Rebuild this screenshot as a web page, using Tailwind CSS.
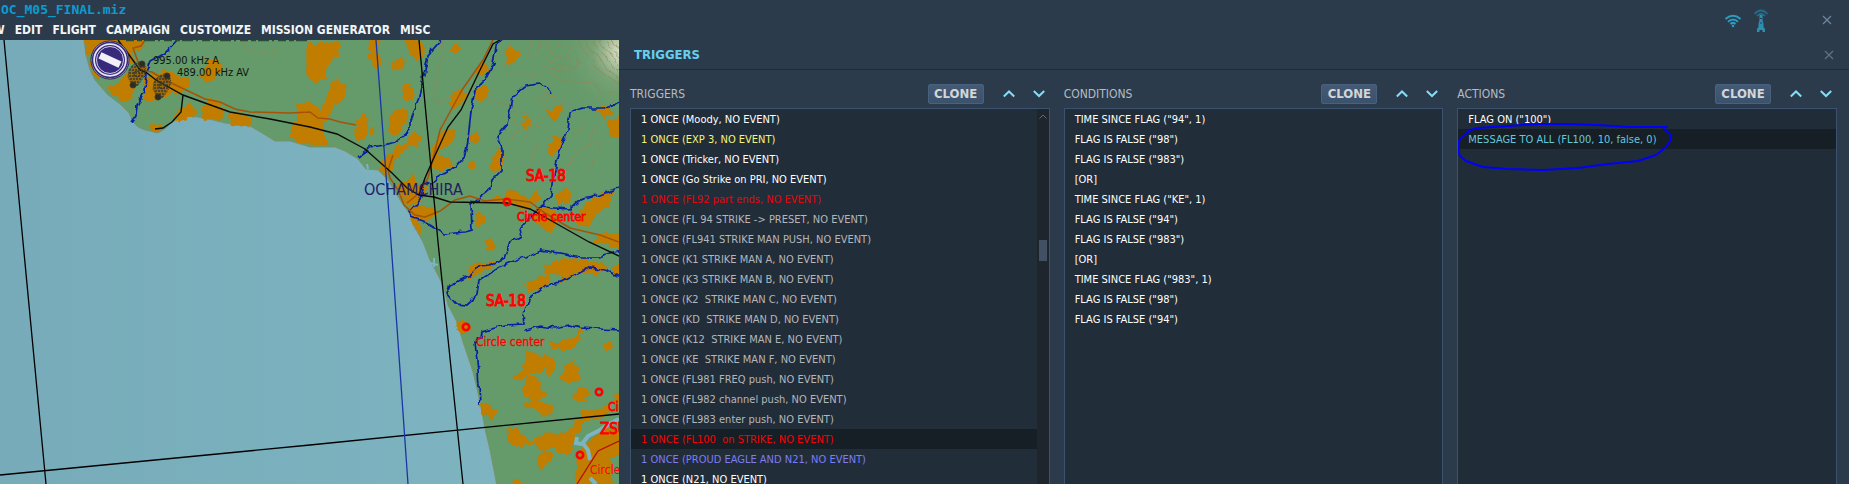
<!DOCTYPE html>
<html lang="en">
<head>
  <meta charset="UTF-8" />
  <meta name="viewport" content="width=device-width, initial-scale=1" />
  <title>Mission Editor - Triggers</title>
  <script src="https://cdn.jsdelivr.net/npm/@tailwindcss/browser@4"></script>
</head>
<body class="h-screen overflow-hidden bg-[#2c3b4c] font-['DejaVu_Sans_Condensed','DejaVu_Sans',sans-serif] text-xs text-white">

  <div class="relative flex h-full flex-col">
    <!-- Title and menu -->
    <header class="h-10 shrink-0 overflow-hidden">
      <h1 class="h-5 pl-px font-['DejaVu_Sans_Mono',monospace] text-[13px] leading-5 font-bold text-[#0c9bd0]">OC_M05_FINAL.miz</h1>
      <nav class="-ml-[27px] flex h-5 items-center gap-2.5 font-bold whitespace-nowrap text-[#f2f4f5]">
        <button>VIEW</button>
        <button>EDIT</button>
        <button>FLIGHT</button>
        <button>CAMPAIGN</button>
        <button>CUSTOMIZE</button>
        <button>MISSION GENERATOR</button>
        <button>MISC</button>
      </nav>
    </header>

    <!-- Connection status and window close -->
    <div class="absolute top-2 right-4 flex items-center">
      <svg class="mr-3 h-4 w-4" viewBox="0 0 16 16" fill="none" stroke="#2d9bbd" stroke-width="2">
        <path d="M.5 7Q8 .5 15.500 7M3 9.800Q8 5.200 13 9.800M5.500 12Q8 9.800 10.500 12" />
        <circle cx="8" cy="14" r="1.200" fill="#2d9bbd" stroke="none" />
      </svg>
      <svg class="mr-13 h-6 w-4" viewBox="0 0 16 24" fill="none">
        <path d="M1.500 6Q8-1 14.500 6M4 8Q8 3.500 12 8" stroke="#1f6f8b" stroke-width="1.800" />
        <path d="M6.500 7h3v5l1 4v3l1.500 2v3H9.500v-2h-3v2H4v-3l1.500-2v-3l1-4z" fill="#2d8fb0" />
        <path d="M7 10.500h2M7 15h2" stroke="#2c3b4c" />
      </svg>
      <button aria-label="Close editor">
        <svg class="h-3 w-3" viewBox="0 0 12 12" stroke="#71869c" stroke-width="1.200"><path d="m2 2 8 8M10 2l-8 8" /></svg>
      </button>
    </div>

    <div class="grid min-h-0 flex-1 grid-cols-[619fr_1230fr] grid-rows-[minmax(0,1fr)]">

      <!-- Map -->
      <svg class="h-full w-full" viewBox="0 40 619 444" preserveAspectRatio="xMinYMin slice" role="img" aria-label="Map">
        <defs>
          <linearGradient id="sea"><stop stop-color="#77abb9" /><stop offset="1" stop-color="#7fb6c2" /></linearGradient>
          <radialGradient id="peak" gradientUnits="userSpaceOnUse" cx="624" cy="52" r="70">
            <stop stop-color="#e4ead8" /><stop offset=".2" stop-color="#b3c6a5" /><stop offset=".45" stop-color="#7da57a" stop-opacity=".7" /><stop offset="1" stop-color="#669a6b" stop-opacity="0" />
          </radialGradient>
          <filter id="rough" filterUnits="userSpaceOnUse" x="0" y="40" width="619" height="444" color-interpolation-filters="sRGB">
            <feTurbulence type="fractalNoise" baseFrequency=".16" numOctaves="2" seed="4" />
            <feDisplacementMap in="SourceGraphic" scale="8" xChannelSelector="R" yChannelSelector="G" />
          </filter>
          <filter id="wavy" filterUnits="userSpaceOnUse" x="0" y="40" width="619" height="444" color-interpolation-filters="sRGB">
            <feTurbulence type="fractalNoise" baseFrequency=".12" numOctaves="2" seed="9" />
            <feDisplacementMap in="SourceGraphic" scale="6" xChannelSelector="R" yChannelSelector="G" />
          </filter>
          <g id="beacon" fill="none" stroke="#3c3a28">
            <path d="M-4-9-8-4-9 3-6 9-3 13 2 10 6 4 9-3 8-9 4-13Z" fill="#3c3a28" fill-opacity=".3" stroke-dasharray="1 1" />
            <path d="M-2-10H7M-6-7H8M-8-4H8M-8-1H8M-8 2H7M-7 5H5M-6 8H3M-4 11H1" stroke-width="1.500" stroke-dasharray="2 1" />
            <circle r="3" />
            <circle cx="5" cy="-10" r="3" fill="#2c2b24" /><circle cx="-4" cy="11" r="3" fill="#2c2b24" />
          </g>
          <g id="spot"><circle r="3.200" fill="none" stroke="#f00" stroke-width="2.600" /></g>
        </defs>

        <rect y="40" width="619" height="444" fill="url(#sea)" />
        <path fill="#659a6a" stroke="#7d8e62" stroke-width=".8" d="M84 40 86 55 90 70 95 80 108 95 120 104 129 113 133 122 138 127 145 130 158 133 165 129 172 122 180 118 190 116 205 118 225 123 250 126 262 133 275 141 290 141 300 144 310 147 335 147 345 151 358 159 366 169 378 170 388 180 400 200 411 216 415 228 423 242 430 260 443 285 448 305 457 322 463 342 473 372 480 402 485 429 490 450 497 486H620V38H84Z" />
        <rect x="520" y="40" width="99" height="90" fill="url(#peak)" />

        <!-- Contours -->
        <g fill="none" stroke="#9a8352" stroke-width=".8" opacity=".8" filter="url(#wavy)">
          <path d="M242 40 247 50 255 54 263 53 268 55 276 49 275 41M443 40 441 60 436 75 435 100 437 104 470 88M487 98 500 104 515 106 540 128M510 40 505 55 504 68 515 74 535 75 548 72 560 80 580 83 595 82 600 92 619 94" />
          <path d="M532 40 528 52 538 63 555 70 571 72 579 62 575 52 566 43M540 42 538 52 552 63 568 65 572 58 562 48 552 41M546 42 552 54 564 60M578 40 584 52 592 60 600 72 619 84M585 40 590 50 600 58 607 70 619 78M592 40 598 50 606 56 612 67 619 72M599 40 604 48 611 54 619 66M606 40 610 46 619 58M612 40 619 50" />
          <path d="M536 98 545 94 560 98 565 104 555 108 540 106ZM543 100 555 101M513 110 518 130 512 140M525 140 535 128 543 118M532 150 540 140 530 165M572 135 590 122 594 128 588 145 575 155 560 180M580 150 600 140 592 165 582 178M387 60 390 68 398 70 406 64 400 54" />
        </g>

        <!-- Built-up areas -->
        <g fill="#c17d00" stroke="#c17d00" filter="url(#rough)">
          <path d="M84 38 143 38 143 47 137 50 132 53 134 62 128 64 120 55 110 50 88 54ZM90 60 96 79 102 78 102 60ZM108 90 118 82 125 76 135 70 142 60 147 68 143 76 134 85 132 98 125 102 118 97 112 96ZM145 80 155 75 165 70 178 76 190 80 189 87 183 92 170 94 158 98 150 101 144 98ZM206 66 212 60 222 62 224 68 218 72 213 80 206 82 200 75ZM184 107 190 104 194 110 198 111 195 117 185 118 178 120 174 116ZM204 104 212 99 220 102 223 112 221 120 208 119 201 117ZM229 114 240 113 252 119 251 125 240 126 230 124ZM151 125 160 124 162 128 155 132Z" />
          <path d="M296 104 312 103 324 118 322 130 328 143 318 146 310 143 296 142 289 134 292 125 298 118ZM307 44 340 42 338 56 328 63 325 78 315 82 307 76ZM332 84 338 80 346 85 345 98 336 104 330 113 325 120 318 115 322 107 328 98ZM370 38 380 38 378 52 381 60 376 70 372 60 368 55ZM391 65 397 58 405 60 402 68 392 69ZM405 38 418 38 425 52 420 58 416 60 410 52ZM402 90 407 82 412 88 414 98 408 102 403 98ZM395 110 405 108 408 118 402 130 396 135 390 132 391 118ZM358 120 363 114 368 116 367 125 364 138 359 141 355 135ZM370 127 374 130 371 135Z" />
          <path d="M452 45 458 43 460 50 456 54 451 51ZM506 50 512 47 521 54 516 62 508 64ZM477 68 483 63 488 70 484 76 478 74ZM477 90 485 84 489 92 486 98 480 101 475 98ZM452 95 458 88 466 95 462 102 455 108 450 103ZM440 136 447 130 455 132 452 143 444 146 438 150 436 156 444 158 452 162 448 167 440 172 434 168 430 158 434 145ZM410 138 415 131 421 138 415 146 410 144ZM390 155 398 145 408 143 404 152 396 158 388 164ZM382 160 390 154 396 164 390 170 386 178 380 170ZM470 136 476 132 479 140 475 145 470 142ZM467 164 473 161 477 166 472 170ZM496 150 502 150 504 160 500 170 494 172 490 165ZM522 122 527 116 531 124 526 130ZM549 112 560 104 562 112 556 120 549 117ZM597 110 608 106 613 114 604 117ZM607 122 621 117 621 138 609 135ZM550 143 556 135 562 140 558 152 552 156 548 150Z" />
          <path d="M397 184 408 182 412 174 416 184 426 188 422 200 410 206 402 196ZM408 208 420 205 432 210 437 213 428 220 418 222 422 232 416 230ZM476 216 482 213 486 220 480 226 476 222ZM490 198 505 197 509 192 520 192 528 198 536 190 540 200 530 206 520 208 508 202 495 203ZM557 196 565 189 573 195 568 202 558 201ZM580 212 590 200 600 195 614 190 610 202 602 210 594 218 588 228 578 224ZM535 210 545 208 560 215 556 224 550 232 540 226 532 220ZM592 242 600 235 615 232 621 236 621 248 600 242ZM485 241 493 241 493 250 487 250Z" />
          <path d="M468 270 475 263 490 263 495 262 488 270 478 275 470 278ZM543 266 555 262 570 258 588 260 603 265 606 270 598 274 584 272 570 276 562 282 560 274 548 274ZM525 285 535 278 548 275 550 283 540 288 528 293ZM612 268 621 265 621 276 613 275ZM457 323 464 319 470 328 462 334 457 330ZM549 346 560 340 575 338 580 337 576 345 566 350 552 348ZM576 330 582 327 585 332 578 336ZM603 345 610 341 611 347 606 352ZM513 379 525 365 528 352 542 356 555 358 554 370 549 376 546 368 535 372 525 376 514 381ZM561 380 566 365 573 361 580 370 578 380 568 383ZM522 390 528 377 538 378 540 386 548 392 546 397 534 400 524 397ZM523 405 535 400 552 405 552 416 543 415 535 410ZM573 396 580 388 590 390 588 399 577 402ZM614 400 621 390 621 404ZM481 404 488 405 497 412 493 418 482 415ZM580 410 595 412 608 405 611 410 600 418 584 420ZM507 429 518 430 525 436 532 444 520 446 508 442ZM534 440 545 433 560 433 573 430 575 440 568 456 560 453 555 448 545 450 536 446ZM577 420 584 418 582 430 575 435 570 430ZM537 460 545 450 552 455 547 466 540 468ZM580 455 586 444 598 434 608 430 621 432 621 452 610 460 612 486H576L577 465ZM510 486 514 480 522 480 520 486Z" />
        </g>

        <!-- Inlets -->
        <g fill="none" stroke="#7db4c2" stroke-width="2">
          <path d="M434 258 434 267M430 263 438 265M367 164 368 169" />
          <path d="M619 419 609 424 600 430 588 436 582 444 576 443 577 437M582 442 588 450 590 460M590 478 596 484" stroke-width="4" />
        </g>

        <!-- Rivers -->
        <g fill="none" stroke="#0620a4" stroke-width="1.700" filter="url(#wavy)">
          <path d="M179 38 165 53 150 62 146 72 145 90 138 105 137 115 132 122M443 38 428 55 424 75 418 100 410 120 410 130 395 142 385 145 370 147 358 157M505 38 496 45 493 65 485 80 475 90 471 110 468 140 465 155 455 167 440 175 432 185 425 182 420 200 410 212 411 217 425 222 445 234 465 232 472 230 471 205 490 190 492 180 502 170 502 150 497 137 507 125 510 110 512 97 525 86 540 84 550 90 552 94" />
          <path d="M621 103 605 108 583 108 570 113 568 130 560 150 554 175 552 195 543 205 540 207 570 209 580 200 600 195 621 187M540 207 530 218 520 228 522 235 510 242 505 258 490 265 480 266 470 275 450 285 446 293 455 304 467 305 478 295 480 280 500 267 515 260 525 257 540 250 565 254 580 258 600 258 603 255 621 250M621 277 605 270 590 267 565 280 545 287 530 298 523 315 524 324 505 325 482 332 481 338 475 342 478 370 480 403M525 330 540 326 555 328 570 325 580 328 600 329 621 330" />
        </g>

        <!-- Roads and railway -->
        <g fill="none" stroke="#a65308" stroke-width="1.500">
          <path d="M145 40 141 46 133 48 141 70 152 72 165 80 205 99 220 102 235 109 250 112 290 113 310 112 318 118 330 119 340 122 356 125M493 40 483 60 462 90 450 112 440 130 434 155 428 178 418 195M393 155 388 170 390 178 398 190 404 205 415 215 425 217 440 211 455 200 470 196 485 201 505 199 530 202 545 213 570 228 600 235 619 242M407 203 417 195" />
        </g>
        <g fill="none" stroke="#0a0a08" stroke-width="1.400">
          <path d="M118 40 127 52 140 70 147 73 156 80 183 95 205 103 230 112 270 119 310 127 337 134 365 149 392 173 407 188 419 195 425 178 432 162 448 127 461 110 480 70 493 44 500 40M407 188 419 195 434 197 450 202 507 203 530 209 550 220 589 242 619 256M183 95 181 112 172 122 163 128 155 129" />
        </g>
        <path d="M577 484 598 451 619 441" fill="none" stroke="#b80c0c" stroke-width="1.300" />

        <!-- Map grid -->
        <g fill="none" stroke="#000" stroke-width="1.300">
          <path d="M4 40 23 242 46 484M419 40 438 242 463 484M0 475 310 445 619 414" />
          <path d="M376 40 391 242 408 484" stroke="#1b35a5" />
        </g>

        <!-- Foot of the place name under the menu bar -->
        <path d="M126 40.500H308" stroke="#2d4c37" stroke-width="1.500" stroke-dasharray="8 3 5 2 11 3 2 4" />

        <!-- Airfield and beacons -->
        <circle cx="110" cy="60" r="19" fill="#e8e5f2" stroke="#252052" />
        <circle cx="110" cy="60" r="17.500" fill="none" stroke="#372a7c" stroke-width="1.500" />
        <circle cx="110" cy="60" r="15" fill="#372a7c" />
        <circle cx="110" cy="60" r="13.500" fill="none" stroke="#cfc9e6" />
        <rect x="-11" y="-3.500" width="22" height="7" fill="#f1eff7" transform="translate(110 60) rotate(25)" />
        <use href="#beacon" x="137" y="74" />
        <use href="#beacon" x="162" y="86" />
        <use href="#spot" x="507" y="202" />
        <use href="#spot" x="466" y="327" />
        <use href="#spot" x="599" y="392" />
        <use href="#spot" x="580" y="455" />

        <!-- Labels -->
        <g font-size="11" fill="#101510">
          <text x="153" y="64">995.00 kHz A</text>
          <text x="177" y="76">489.00 kHz AV</text>
        </g>
        <text x="364" y="195" font-size="16" fill="#241c66">OCHAMCHIRA</text>
        <g fill="#f00" stroke="#f00" font-size="12">
          <g font-size="15">
            <text x="526" y="181">SA-18</text>
            <text x="486" y="306">SA-18</text>
            <text x="600" y="434">ZSU</text>
          </g>
          <text x="517" y="221" stroke-width=".8">Circle center</text>
          <text x="476" y="346" stroke-width=".3">Circle center</text>
          <text x="608" y="411" stroke-width=".8">Circle center</text>
          <text x="590" y="474" stroke="none">Circle center</text>
        </g>
      </svg>

      <!-- Triggers panel -->
      <main class="flex min-w-0 flex-col">
        <div class="flex h-[30px] shrink-0 items-center justify-between border-b border-[#1f2d3b] pr-3.5 pl-[15px]">
          <h2 class="text-[13px] font-bold text-[#67cfee]">TRIGGERS</h2>
          <button aria-label="Close triggers">
            <svg class="h-3 w-3" viewBox="0 0 12 12" stroke="#5f7388" stroke-width="1.200"><path d="m2 2 8 8M10 2l-8 8" /></svg>
          </button>
        </div>

        <div class="grid min-h-0 flex-1 grid-cols-[420fr_380fr_380fr] grid-rows-[minmax(0,1fr)] gap-3.5 pr-3 pl-[11px]">

          <section class="flex min-h-0 min-w-0 flex-col">
            <div class="flex h-[38px] shrink-0 items-end pb-1">
              <h3 class="flex-1 leading-5 text-[#b5bbc1]">TRIGGERS</h3>
              <button class="mr-[19px] h-5 w-14 rounded-xs border border-[#48617c] bg-linear-to-b from-[#455a74] to-[#3a526d] text-[13px] leading-4 font-bold text-[#d3d5d7]">CLONE</button>
              <button class="mr-[18px] flex h-5 items-center" aria-label="Move trigger up"><svg class="h-3 w-3" viewBox="0 0 12 12" fill="none" stroke="#85dcf4" stroke-width="2"><path d="m.8 8.500 5.200-5 5.200 5" /></svg></button>
              <button class="mr-[5px] flex h-5 items-center" aria-label="Move trigger down"><svg class="h-3 w-3" viewBox="0 0 12 12" fill="none" stroke="#85dcf4" stroke-width="2"><path d="m.8 3 5.200 5L11.200 3" /></svg></button>
            </div>
            <div class="flex min-h-0 flex-1 overflow-hidden border border-b-0 border-[#3b536e] bg-[#222d3a]">
              <ul class="flex-1 text-[11px] leading-[22px] text-[#b4b7ba] *:h-5 *:pl-2.5 *:whitespace-pre">
                <li class="text-white">1 ONCE (Moody, NO EVENT)</li>
                <li class="text-[#f5f579]">1 ONCE (EXP 3, NO EVENT)</li>
                <li class="text-white">1 ONCE (Tricker, NO EVENT)</li>
                <li class="text-white">1 ONCE (Go Strike on PRI, NO EVENT)</li>
                <li class="text-[#e80509]">1 ONCE (FL92 part ends, NO EVENT)</li>
                <li>1 ONCE (FL 94 STRIKE -&gt; PRESET, NO EVENT)</li>
                <li>1 ONCE (FL941 STRIKE MAN PUSH, NO EVENT)</li>
                <li>1 ONCE (K1 STRIKE MAN A, NO EVENT)</li>
                <li>1 ONCE (K3 STRIKE MAN B, NO EVENT)</li>
                <li>1 ONCE (K2  STRIKE MAN C, NO EVENT)</li>
                <li>1 ONCE (KD  STRIKE MAN D, NO EVENT)</li>
                <li>1 ONCE (K12  STRIKE MAN E, NO EVENT)</li>
                <li>1 ONCE (KE  STRIKE MAN F, NO EVENT)</li>
                <li>1 ONCE (FL981 FREQ push, NO EVENT)</li>
                <li>1 ONCE (FL982 channel push, NO EVENT)</li>
                <li>1 ONCE (FL983 enter push, NO EVENT)</li>
                <li class="bg-[#161e26] text-[#fb0000]">1 ONCE (FL100  on STRIKE, NO EVENT)</li>
                <li class="text-[#7d7df4]">1 ONCE (PROUD EAGLE AND N21, NO EVENT)</li>
                <li class="text-white">1 ONCE (N21, NO EVENT)</li>
              </ul>
              <!-- Scrollbar -->
              <div class="flex w-3 flex-col items-center bg-[#1f252c] pt-1">
                <svg class="h-2 w-2" viewBox="0 0 8 8" fill="none" stroke="#626a73"><path d="m.5 5.500 3.500-3.500 3.500 3.500" /></svg>
                <div class="mt-[119px] h-[21px] w-2 bg-[#415062]"></div>
              </div>
            </div>
          </section>

          <section class="flex min-h-0 min-w-0 flex-col">
            <div class="flex h-[38px] shrink-0 items-end pb-1">
              <h3 class="flex-1 leading-5 text-[#b5bbc1]">CONDITIONS</h3>
              <button class="mr-[19px] h-5 w-14 rounded-xs border border-[#48617c] bg-linear-to-b from-[#455a74] to-[#3a526d] text-[13px] leading-4 font-bold text-[#d3d5d7]">CLONE</button>
              <button class="mr-[18px] flex h-5 items-center" aria-label="Move condition up"><svg class="h-3 w-3" viewBox="0 0 12 12" fill="none" stroke="#85dcf4" stroke-width="2"><path d="m.8 8.500 5.200-5 5.200 5" /></svg></button>
              <button class="mr-[5px] flex h-5 items-center" aria-label="Move condition down"><svg class="h-3 w-3" viewBox="0 0 12 12" fill="none" stroke="#85dcf4" stroke-width="2"><path d="m.8 3 5.200 5L11.200 3" /></svg></button>
            </div>
            <ul class="min-h-0 flex-1 overflow-hidden border border-b-0 border-[#3b536e] bg-[#222d3a] text-[11px] leading-[22px] *:h-5 *:pl-2.5 *:whitespace-pre">
              <li>TIME SINCE FLAG ("94", 1)</li>
              <li>FLAG IS FALSE ("98")</li>
              <li>FLAG IS FALSE ("983")</li>
              <li>[OR]</li>
              <li>TIME SINCE FLAG ("KE", 1)</li>
              <li>FLAG IS FALSE ("94")</li>
              <li>FLAG IS FALSE ("983")</li>
              <li>[OR]</li>
              <li>TIME SINCE FLAG ("983", 1)</li>
              <li>FLAG IS FALSE ("98")</li>
              <li>FLAG IS FALSE ("94")</li>
            </ul>
          </section>

          <section class="flex min-h-0 min-w-0 flex-col">
            <div class="flex h-[38px] shrink-0 items-end pb-1">
              <h3 class="flex-1 leading-5 text-[#b5bbc1]">ACTIONS</h3>
              <button class="mr-[19px] h-5 w-14 rounded-xs border border-[#48617c] bg-linear-to-b from-[#455a74] to-[#3a526d] text-[13px] leading-4 font-bold text-[#d3d5d7]">CLONE</button>
              <button class="mr-[18px] flex h-5 items-center" aria-label="Move action up"><svg class="h-3 w-3" viewBox="0 0 12 12" fill="none" stroke="#85dcf4" stroke-width="2"><path d="m.8 8.500 5.200-5 5.200 5" /></svg></button>
              <button class="mr-[5px] flex h-5 items-center" aria-label="Move action down"><svg class="h-3 w-3" viewBox="0 0 12 12" fill="none" stroke="#85dcf4" stroke-width="2"><path d="m.8 3 5.200 5L11.200 3" /></svg></button>
            </div>
            <div class="relative min-h-0 flex-1 border border-b-0 border-[#3b536e] bg-[#202c38]">
              <ul class="text-[11px] leading-[22px] *:h-5 *:pl-2.5 *:whitespace-pre">
                <li>FLAG ON ("100")</li>
                <li class="bg-[#161e26] text-[#67c8dc]">MESSAGE TO ALL (FL100, 10, false, 0)</li>
              </ul>
              <!-- Pen mark round the selected action -->
              <svg class="pointer-events-none absolute top-3 left-0 h-[52px] w-[216px]" viewBox="0 0 216 52" fill="none" stroke="#0000fb" stroke-width="2" stroke-linecap="round" stroke-linejoin="round">
                <path d="M209 6H170L140 4 110 3H80L50 5 20 7 12 9 4 16 1 20V32L2 35 8 40 25 46 50 48 85 49 120 47 150 43 180 40 198 34 208 26 212 20V13L206 8" />
              </svg>
            </div>
          </section>

        </div>
      </main>
    </div>
  </div>

</body>
</html>
